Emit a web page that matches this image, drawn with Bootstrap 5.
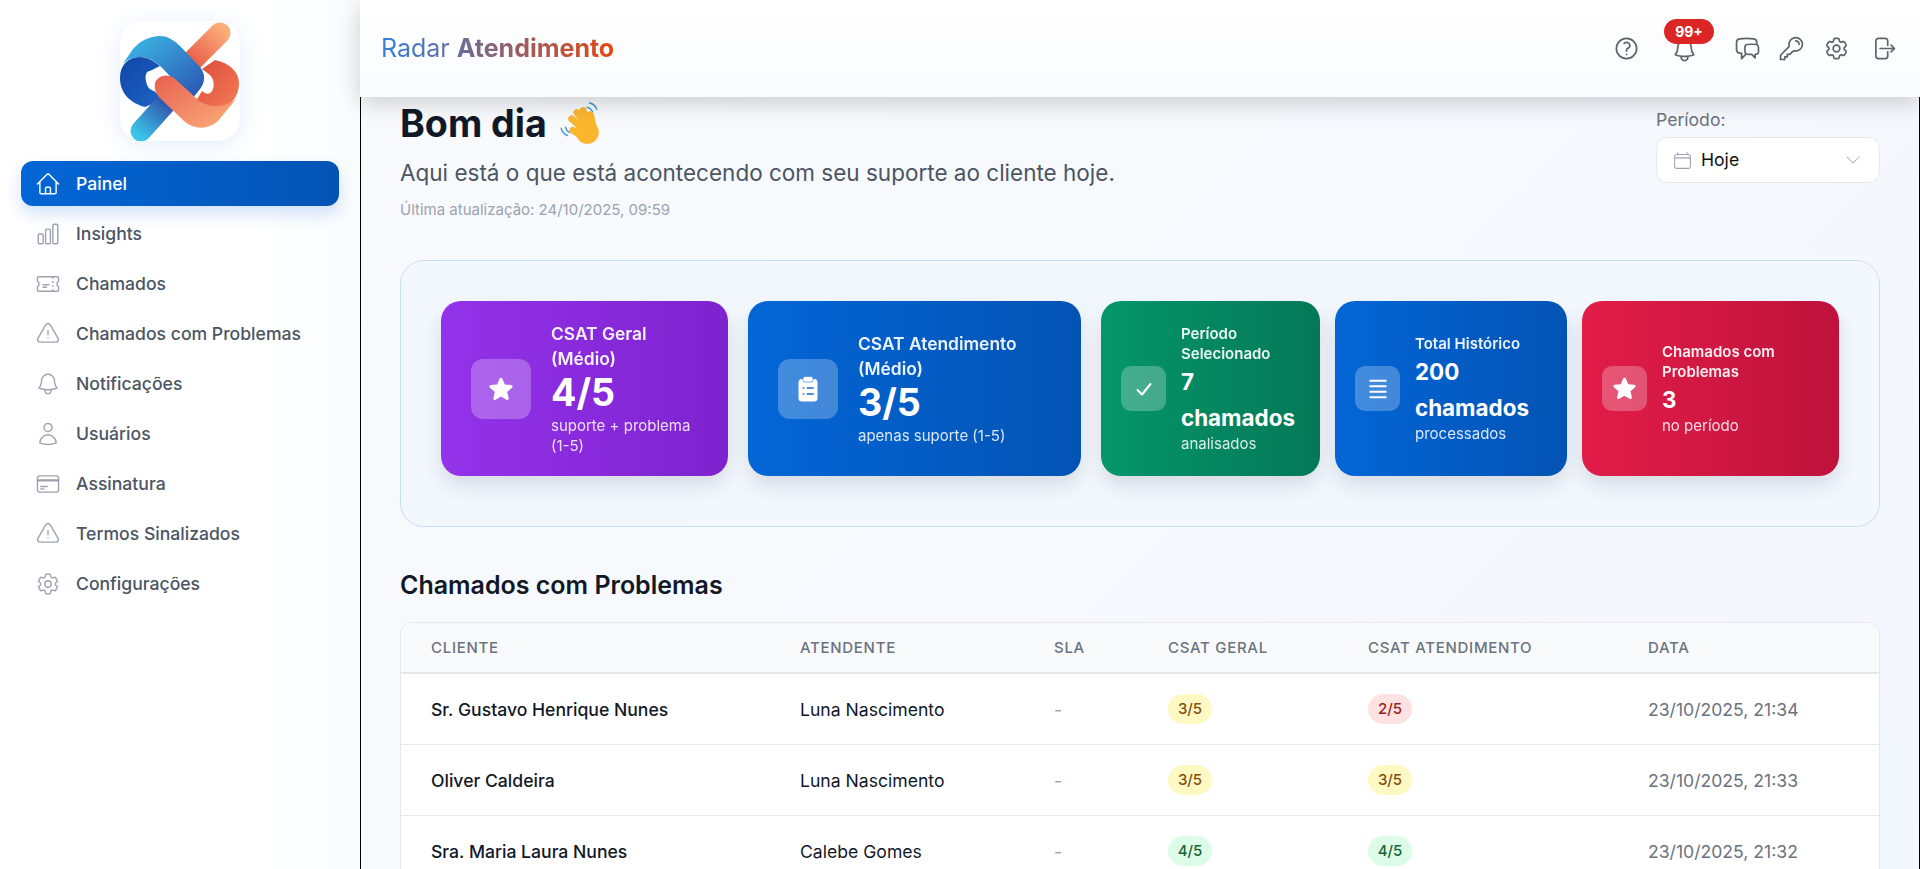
<!DOCTYPE html>
<html lang="pt-BR">
<head>
<meta charset="utf-8">
<title>Radar Atendimento</title>
<link href="https://cdn.jsdelivr.net/npm/bootstrap@5.3.0/dist/css/bootstrap.min.css" rel="stylesheet">
<style>
html,body{height:100%}
body{font-family:Inter,"Liberation Sans",sans-serif;background:#fff;overflow:hidden;color:#111827}
svg.ic{fill:none;stroke:currentColor;stroke-width:1.5;stroke-linecap:round;stroke-linejoin:round;flex:none}
.app-shell{height:869px}
.side-rail{width:360px;flex:none;background:linear-gradient(90deg,#fff 0%,#fff 70%,#f9fbfd 100%);padding:21px 21px 0 21px}
.logo-box{width:120px;height:120px;border-radius:22px;background:#fff;box-shadow:0 4px 24px rgba(59,130,246,.14);margin:0 auto 20px 99px}
.side-link{height:45px;margin-bottom:5px;padding:2px 14px 0;border-radius:12px;color:#4b5563;font-weight:500;font-size:17.6px;text-decoration:none;gap:15px}
.side-link svg{width:26px;height:26px;color:#9ca3af;stroke-width:1.3;margin-top:-2px}
.side-link.on{background:linear-gradient(90deg,#0366d6,#0353b4);color:#fff;box-shadow:0 8px 16px rgba(3,102,214,.18)}
.side-link.on svg{color:#fff}
.top-bar{height:97px;flex:none;margin-left:0;padding:0 23px 0 21px;background:linear-gradient(180deg,#fff,#fafbfd);box-shadow:0 6px 22px rgba(0,0,0,.18);position:relative;z-index:5}
.brand-name{font-size:25px;line-height:1;background:linear-gradient(90deg,#2f80dc 0%,#e6460f 100%);-webkit-background-clip:text;background-clip:text;color:transparent;font-weight:400}
.brand-name b{font-weight:700}
.top-icons{gap:0;color:#5f6368}
.top-btn{position:relative;color:#5f6368;background:none;border:0;padding:0;display:flex}
.top-btn svg{width:27px;height:27px;stroke-width:1.5}
.bell-btn{margin-top:4px}
.count-pill{position:absolute;left:-7px;top:-18px;width:50px;height:25px;border-radius:13px;background:#dc2626;color:#fff;font-size:14px;font-weight:700;line-height:25px;text-align:center}
.work-area{min-width:0;height:869px}
.scroll-pane{flex:1;min-height:0;overflow:hidden;border-left:1px solid #000;border-right:1px solid #000;background:linear-gradient(135deg,#f8fafc 0%,#f3f7fe 100%);padding:0 39px 0 39px}
.hello-row{padding-top:4px;height:163px}
.hello-title{font-size:37.6px;font-weight:700;color:#111827;line-height:44px;margin:0}
.hello-sub{font-size:22.5px;color:#4b5563;line-height:30px;margin:11px 0 0}
.hello-time{font-size:15px;color:#9ca3af;line-height:20px;margin:12px 0 0}
.hand{width:46px;height:46px;vertical-align:-10px;margin-left:1px}
.period-box{width:224px;margin-top:7px}
.period-label{font-size:17.6px;color:#6b7280;line-height:24px;margin-bottom:5px}
.period-select{height:46px;background:#fff;border:1px solid #e5e7eb;border-radius:12px;padding:0 16px 0 15px;font-size:17.6px;color:#111;font-weight:400;gap:8px}
.period-select .cal{width:21px;height:21px;color:#9ca3af;stroke-width:1.2}
.period-select .chev{width:20px;height:20px;color:#9ca3af;margin-left:auto;stroke-width:1.2}
.stats-panel{height:267px;border:1px solid #c8dff8;border-radius:24px;background:#f3f8fe;padding:40px;gap:15px}
.stat-tile{height:175px;border-radius:20px;color:#fff;padding:0 30px;gap:20px;box-shadow:0 10px 20px rgba(17,24,39,.12);flex:none}
.tile-a{width:287px;background:linear-gradient(90deg,#9333ea,#7e22ce);margin-right:5px}
.tile-b{width:333px;background:linear-gradient(90deg,#0366d6,#0353b4);margin-right:5px}
.tile-c{width:219px;background:linear-gradient(90deg,#059669,#047857)}
.tile-d{width:232px;background:linear-gradient(90deg,#0366d6,#0353b4)}
.tile-e{width:257px;background:linear-gradient(90deg,#e11d48,#be123c)}
.tile-sm{padding:0 20px;gap:15px}
.tile-glyph{width:60px;height:60px;border-radius:12px;background:rgba(255,255,255,.25);flex:none}
.tile-sm .tile-glyph{width:45px;height:45px;border-radius:10px}
.tile-glyph svg{width:28px;height:28px}
.tile-glyph svg.clip{width:24px;height:26px}
.tile-sm .tile-glyph svg{width:24px;height:24px}
.tile-sm .tile-glyph svg.big-star{width:27px;height:27px}
.tile-cap{font-size:17.4px;font-weight:600;line-height:25px;opacity:.92}
.tile-num{font-size:37.6px;font-weight:700;line-height:44px;margin-bottom:1.5px}
.tile-note{font-size:15px;line-height:20px;opacity:.85}
.tile-sm .tile-cap{font-size:15px;line-height:20px}
.tile-sm .tile-num{font-size:22.4px;line-height:36px;margin-bottom:0}
.tile-sm .tile-note{margin-top:-2px}
.section-head{font-size:25px;font-weight:600;color:#111827;line-height:32px;margin:42px 0 21px}
.data-wrap{background:#fff;border:1px solid #e5e7eb;border-bottom:0;border-radius:12px 12px 0 0;overflow:hidden}
.data-grid{table-layout:fixed;width:100%;margin:0}
.data-grid th{background:#f9fafb;font-size:15px;font-weight:500;letter-spacing:.7px;text-transform:uppercase;color:#6b7280;height:50px;padding:2px 0 0 30px;vertical-align:middle;border-bottom:2px solid #e5e7eb}
.data-grid td{height:71px;padding:3px 0 0 30px;vertical-align:middle;font-size:17.6px;font-weight:500;color:#111827;border-bottom:1px solid #e5e7eb;background:#fff}
.data-grid td.plain{font-weight:400}
.data-grid td.dim{color:#6b7280;font-weight:400}
.data-grid td.dash{color:#9ca3af;font-weight:400}
.score{display:inline-block;width:44px;height:30px;line-height:30px;border-radius:15px;text-align:center;font-size:15px;font-weight:500;position:relative;top:-1px}
.score-y{background:#fef9c3;color:#854d0e}
.score-r{background:#fee2e2;color:#991b1b}
.score-g{background:#dcfce7;color:#166534}
</style>
</head>
<body>
<svg width="0" height="0" class="position-absolute">
  <defs>
    <linearGradient id="gOr" gradientUnits="userSpaceOnUse" x1="72" y1="40" x2="102" y2="8"><stop offset="0" stop-color="#e8604c"/><stop offset="1" stop-color="#fbac78"/></linearGradient>
    <linearGradient id="gRd" x1="0" y1="0" x2="1" y2="1"><stop offset="0" stop-color="#dd4a3c"/><stop offset="1" stop-color="#f47c55"/></linearGradient>
    <linearGradient id="gDb" x1="0" y1="0" x2="1" y2="1"><stop offset="0" stop-color="#0f46a8"/><stop offset="1" stop-color="#1f66c4"/></linearGradient>
    <linearGradient id="gBl" x1="0" y1="0" x2="1" y2="1"><stop offset="0" stop-color="#3cc0e8"/><stop offset="1" stop-color="#2a4fb0"/></linearGradient>
    <linearGradient id="gLb" gradientUnits="userSpaceOnUse" x1="18" y1="114" x2="48" y2="80"><stop offset="0" stop-color="#3bc4ea"/><stop offset="1" stop-color="#3050a8"/></linearGradient>
    <linearGradient id="gSa" x1="0" y1="0" x2="1" y2="1"><stop offset="0" stop-color="#e85f50"/><stop offset="1" stop-color="#fbb07a"/></linearGradient>
  </defs>
</svg>
<div class="app-shell d-flex">
  <aside class="side-rail">
    <div class="logo-box">
      <svg viewBox="0 0 120 120" width="120" height="120" aria-label="Logo">
        <path d="M100 12 L72 40" stroke="url(#gOr)" stroke-width="21" stroke-linecap="round" fill="none"/>
        <path d="M95 39 C110 42 120 52 119 64 C118 78 108 88 94 87 L76 80 L82 70 C85 73 90 74 92 70 C95 65 94 58 90 54 L82 48Z" fill="url(#gRd)"/>
        <path d="M0 57 C0 44 8 36 20 36 C28 36 34 40 40 45 L30 50 C26 50 25 55 26 60 C27 66 30 69 34 70 L44 78 L25 86 C10 82 0 72 0 57Z" fill="url(#gDb)"/>
        <path d="M21 110 L46 82" stroke="url(#gLb)" stroke-width="21" stroke-linecap="round" fill="none"/>
        <path d="M2 44 L13 28 C20 20 30 15 40 15 C48 15 55 20 60 25 L80 46 C86 53 85 62 80 68 L72 78 L45 50 C38 42 30 36 20 36 C12 36 6 39 2 44Z" fill="url(#gBl)"/>
        <path d="M35 62 C38 55 46 52 54 57 L76 77 C84 85 100 90 116 78 L98 100 C88 109 74 109 64 100 L40 77 C36 73 34 68 35 62Z" fill="url(#gSa)"/>
      </svg>
    </div>
    <nav class="d-flex flex-column">
      <a class="side-link on d-flex align-items-center" href="#"><svg class="ic" viewBox="0 0 24 24"><path d="m2.25 12 8.954-8.955c.44-.439 1.152-.439 1.591 0L21.75 12M4.5 9.75v10.125c0 .621.504 1.125 1.125 1.125H9.75v-4.875c0-.621.504-1.125 1.125-1.125h2.25c.621 0 1.125.504 1.125 1.125V21h4.125c.621 0 1.125-.504 1.125-1.125V9.75M8.25 21h8.25"/></svg>Painel</a>
      <a class="side-link d-flex align-items-center" href="#"><svg class="ic" viewBox="0 0 24 24"><path d="M3 13.125C3 12.504 3.504 12 4.125 12h2.25c.621 0 1.125.504 1.125 1.125v6.75C7.5 20.496 6.996 21 6.375 21h-2.25A1.125 1.125 0 0 1 3 19.875v-6.75ZM9.75 8.625c0-.621.504-1.125 1.125-1.125h2.25c.621 0 1.125.504 1.125 1.125v11.25c0 .621-.504 1.125-1.125 1.125h-2.25a1.125 1.125 0 0 1-1.125-1.125V8.625ZM16.5 4.125c0-.621.504-1.125 1.125-1.125h2.25C20.496 3 21 3.504 21 4.125v15.75c0 .621-.504 1.125-1.125 1.125h-2.25a1.125 1.125 0 0 1-1.125-1.125V4.125Z"/></svg>Insights</a>
      <a class="side-link d-flex align-items-center" href="#"><svg class="ic" viewBox="0 0 24 24"><path d="M16.5 6v.75m0 3v.75m0 3v.75m0 3V18m-9-5.25h5.25M7.5 15h3M3.375 5.25c-.621 0-1.125.504-1.125 1.125v3.026a2.999 2.999 0 0 1 0 5.198v3.026c0 .621.504 1.125 1.125 1.125h17.25c.621 0 1.125-.504 1.125-1.125v-3.026a2.999 2.999 0 0 1 0-5.198V6.375c0-.621-.504-1.125-1.125-1.125H3.375Z"/></svg>Chamados</a>
      <a class="side-link d-flex align-items-center" href="#"><svg class="ic" viewBox="0 0 24 24"><path d="M12 9v3.75m-9.303 3.376c-.866 1.5.217 3.374 1.948 3.374h14.71c1.73 0 2.813-1.874 1.948-3.374L13.949 3.378c-.866-1.5-3.032-1.5-3.898 0L2.697 16.126ZM12 15.75h.007v.008H12v-.008Z"/></svg>Chamados com Problemas</a>
      <a class="side-link d-flex align-items-center" href="#"><svg class="ic" viewBox="0 0 24 24"><path d="M14.857 17.082a23.848 23.848 0 0 0 5.454-1.31A8.967 8.967 0 0 1 18 9.75V9A6 6 0 0 0 6 9v.75a8.967 8.967 0 0 1-2.312 6.022c1.733.64 3.56 1.085 5.455 1.31m5.714 0a24.255 24.255 0 0 1-5.714 0m5.714 0a3 3 0 1 1-5.714 0"/></svg>Notificações</a>
      <a class="side-link d-flex align-items-center" href="#"><svg class="ic" viewBox="0 0 24 24"><path d="M15.75 6a3.75 3.75 0 1 1-7.5 0 3.75 3.75 0 0 1 7.5 0ZM4.501 20.118a7.5 7.5 0 0 1 14.998 0A17.933 17.933 0 0 1 12 21.75c-2.676 0-5.216-.584-7.499-1.632Z"/></svg>Usuários</a>
      <a class="side-link d-flex align-items-center" href="#"><svg class="ic" viewBox="0 0 24 24"><path d="M2.25 8.25h19.5M2.25 9h19.5m-16.5 5.25h6m-6 2.25h3m-3.75 3h15a2.25 2.25 0 0 0 2.25-2.25V6.75A2.25 2.25 0 0 0 19.5 4.5h-15a2.25 2.25 0 0 0-2.25 2.25v10.5A2.25 2.25 0 0 0 4.5 19.5Z"/></svg>Assinatura</a>
      <a class="side-link d-flex align-items-center" href="#"><svg class="ic" viewBox="0 0 24 24"><path d="M12 9v3.75m-9.303 3.376c-.866 1.5.217 3.374 1.948 3.374h14.71c1.73 0 2.813-1.874 1.948-3.374L13.949 3.378c-.866-1.5-3.032-1.5-3.898 0L2.697 16.126ZM12 15.75h.007v.008H12v-.008Z"/></svg>Termos Sinalizados</a>
      <a class="side-link d-flex align-items-center" href="#"><svg class="ic" viewBox="0 0 24 24"><path d="M9.594 3.94c.09-.542.56-.94 1.11-.94h2.593c.55 0 1.02.398 1.11.94l.213 1.281c.063.374.313.686.645.87.074.04.147.083.22.127.325.196.72.257 1.075.124l1.217-.456a1.125 1.125 0 0 1 1.37.49l1.296 2.247a1.125 1.125 0 0 1-.26 1.431l-1.003.827c-.293.241-.438.613-.43.992a7.723 7.723 0 0 1 0 .255c-.008.378.137.75.43.991l1.004.827c.424.35.534.955.26 1.43l-1.298 2.247a1.125 1.125 0 0 1-1.369.491l-1.217-.456c-.355-.133-.75-.072-1.076.124a6.47 6.47 0 0 1-.22.128c-.331.183-.581.495-.644.869l-.213 1.281c-.09.543-.56.94-1.11.94h-2.594c-.55 0-1.019-.398-1.11-.94l-.213-1.281c-.062-.374-.312-.686-.644-.87a6.52 6.52 0 0 1-.22-.127c-.325-.196-.72-.257-1.076-.124l-1.217.456a1.125 1.125 0 0 1-1.369-.49l-1.297-2.247a1.125 1.125 0 0 1 .26-1.431l1.004-.827c.292-.24.437-.613.43-.991a6.932 6.932 0 0 1 0-.255c.007-.38-.138-.751-.43-.992l-1.004-.827a1.125 1.125 0 0 1-.26-1.43l1.297-2.247a1.125 1.125 0 0 1 1.37-.491l1.216.456c.356.133.751.072 1.076-.124.072-.044.146-.086.22-.128.332-.183.582-.495.644-.869l.214-1.28Z"/><path d="M15 12a3 3 0 1 1-6 0 3 3 0 0 1 6 0Z"/></svg>Configurações</a>
    </nav>
  </aside>
  <div class="work-area flex-grow-1 d-flex flex-column">
    <header class="top-bar d-flex align-items-center justify-content-between">
      <div class="brand-name">Radar <b>Atendimento</b></div>
      <div class="top-icons d-flex align-items-center">
        <button class="top-btn" style="margin-right:31px"><svg class="ic" viewBox="0 0 24 24"><path d="M9.879 7.519c1.171-1.025 3.071-1.025 4.242 0 1.172 1.025 1.172 2.687 0 3.712-.203.179-.43.326-.67.442-.745.361-1.45.999-1.45 1.827v.75M21 12a9 9 0 1 1-18 0 9 9 0 0 1 18 0Zm-9 5.25h.008v.008H12v-.008Z"/></svg></button>
        <button class="top-btn bell-btn" style="margin-right:36px"><svg class="ic" viewBox="0 0 24 24"><path d="M14.857 17.082a23.848 23.848 0 0 0 5.454-1.31A8.967 8.967 0 0 1 18 9.75V9A6 6 0 0 0 6 9v.75a8.967 8.967 0 0 1-2.312 6.022c1.733.64 3.56 1.085 5.455 1.31m5.714 0a24.255 24.255 0 0 1-5.714 0m5.714 0a3 3 0 1 1-5.714 0"/></svg><span class="count-pill">99+</span></button>
        <button class="top-btn" style="margin-right:17px"><svg class="ic" viewBox="0 0 24 24"><path d="M20.25 8.511c.884.284 1.5 1.128 1.5 2.097v4.286c0 1.136-.847 2.1-1.98 2.193-.34.027-.68.052-1.02.072v3.091l-3-3c-1.354 0-2.694-.055-4.02-.163a2.115 2.115 0 0 1-.825-.242m9.345-8.334a2.126 2.126 0 0 0-.476-.095 48.64 48.64 0 0 0-8.048 0c-1.131.094-1.976 1.057-1.976 2.192v4.286c0 .837.46 1.58 1.155 1.951m9.345-8.334V6.637c0-1.621-1.152-3.026-2.76-3.235A48.455 48.455 0 0 0 11.25 3c-2.115 0-4.198.137-6.24.402-1.608.209-2.76 1.614-2.76 3.235v6.226c0 1.621 1.152 3.026 2.76 3.235.577.075 1.157.14 1.74.194V21l4.155-4.155"/></svg></button>
        <button class="top-btn" style="margin-right:18px"><svg class="ic" viewBox="0 0 24 24"><path d="M15.75 5.25a3 3 0 0 1 3 3m3 0a6 6 0 0 1-7.029 5.912c-.563-.097-1.159.026-1.563.43L10.5 17.25H8.25v2.25H6v2.25H2.25v-2.818c0-.597.237-1.17.659-1.591l6.499-6.499c.404-.404.527-1 .43-1.563A6 6 0 1 1 21.75 8.25Z"/></svg></button>
        <button class="top-btn" style="margin-right:20px"><svg class="ic" viewBox="0 0 24 24"><path d="M9.594 3.94c.09-.542.56-.94 1.11-.94h2.593c.55 0 1.02.398 1.11.94l.213 1.281c.063.374.313.686.645.87.074.04.147.083.22.127.325.196.72.257 1.075.124l1.217-.456a1.125 1.125 0 0 1 1.37.49l1.296 2.247a1.125 1.125 0 0 1-.26 1.431l-1.003.827c-.293.241-.438.613-.43.992a7.723 7.723 0 0 1 0 .255c-.008.378.137.75.43.991l1.004.827c.424.35.534.955.26 1.43l-1.298 2.247a1.125 1.125 0 0 1-1.369.491l-1.217-.456c-.355-.133-.75-.072-1.076.124a6.47 6.47 0 0 1-.22.128c-.331.183-.581.495-.644.869l-.213 1.281c-.09.543-.56.94-1.11.94h-2.594c-.55 0-1.019-.398-1.11-.94l-.213-1.281c-.062-.374-.312-.686-.644-.87a6.52 6.52 0 0 1-.22-.127c-.325-.196-.72-.257-1.076-.124l-1.217.456a1.125 1.125 0 0 1-1.369-.49l-1.297-2.247a1.125 1.125 0 0 1 .26-1.431l1.004-.827c.292-.24.437-.613.43-.991a6.932 6.932 0 0 1 0-.255c.007-.38-.138-.751-.43-.992l-1.004-.827a1.125 1.125 0 0 1-.26-1.43l1.297-2.247a1.125 1.125 0 0 1 1.37-.491l1.216.456c.356.133.751.072 1.076-.124.072-.044.146-.086.22-.128.332-.183.582-.495.644-.869l.214-1.28Z"/><path d="M15 12a3 3 0 1 1-6 0 3 3 0 0 1 6 0Z"/></svg></button>
        <button class="top-btn"><svg class="ic" viewBox="0 0 24 24"><path d="M15.75 9V5.25A2.25 2.25 0 0 0 13.5 3h-6a2.25 2.25 0 0 0-2.25 2.25v13.5A2.25 2.25 0 0 0 7.5 21h6a2.25 2.25 0 0 0 2.25-2.25V15m3 0 3-3m0 0-3-3m3 3H9"/></svg></button>
      </div>
    </header>
    <main class="scroll-pane">
      <div class="hello-row d-flex justify-content-between align-items-start">
        <div>
          <h1 class="hello-title">Bom dia <svg class="hand" viewBox="0 0 44 44" aria-hidden="true"><g fill="none" stroke-linecap="round"><path d="M31 2c3 .6 6 3 7 6M29 6c2 .5 4 2 5 4" stroke="#3d9bd6" stroke-width="1.4"/><path d="M4 26c.6 3 3 6 6 7M8 25c.5 2 2 4 4 5" stroke="#3d9bd6" stroke-width="1.4"/><g stroke="#fbb62e" stroke-width="6.500"><path d="M25 27 14 17"/><path d="M28 24 19 11"/><path d="M31 24 25 9"/><path d="M35 26 32 13"/><path d="M25 34 15 28"/></g></g><circle cx="29" cy="30" r="11" fill="#fbb62e"/></svg></h1>
          <p class="hello-sub">Aqui está o que está acontecendo com seu suporte ao cliente hoje.</p>
          <p class="hello-time">Última atualização: 24/10/2025, 09:59</p>
        </div>
        <div class="period-box">
          <div class="period-label">Período:</div>
          <div class="period-select d-flex align-items-center">
            <svg class="ic cal" viewBox="0 0 24 24"><path d="M6.75 3v2.250M17.250 3v2.250M3 18.750V7.500a2.250 2.250 0 0 1 2.250-2.250h13.500A2.250 2.250 0 0 1 21 7.500v11.250m-18 0A2.250 2.250 0 0 0 5.250 21h13.500A2.250 2.250 0 0 0 21 18.750m-18 0v-7.500A2.250 2.250 0 0 1 5.250 9h13.500A2.250 2.250 0 0 1 21 11.250v7.500"/></svg>
            <span>Hoje</span>
            <svg class="ic chev" viewBox="0 0 24 24"><path d="m19.500 8.250-7.500 7.500-7.500-7.500"/></svg>
          </div>
        </div>
      </div>
      <section class="stats-panel d-flex">
        <div class="stat-tile tile-a d-flex align-items-center">
          <div class="tile-glyph d-flex align-items-center justify-content-center"><svg viewBox="0 0 24 24" fill="#fff"><path d="M10.788 3.21c.448-1.077 1.976-1.077 2.424 0l2.082 5.006 5.404.434c1.164.093 1.636 1.545.749 2.305l-4.117 3.527 1.257 5.273c.271 1.136-.964 2.033-1.96 1.425L12 18.354 7.373 21.18c-.996.608-2.231-.29-1.96-1.425l1.257-5.273-4.117-3.527c-.887-.76-.415-2.212.749-2.305l5.404-.434 2.082-5.005Z"/></svg></div>
          <div>
            <div class="tile-cap">CSAT Geral (Médio)</div>
            <div class="tile-num">4/5</div>
            <div class="tile-note">suporte + problema (1-5)</div>
          </div>
        </div>
        <div class="stat-tile tile-b d-flex align-items-center">
          <div class="tile-glyph d-flex align-items-center justify-content-center"><svg class="clip" viewBox="0 0 24 26"><rect x="2.500" y="3" width="19" height="22.500" rx="3.500" fill="#fff"/><rect x="7" y=".5" width="10" height="5.500" rx="2" fill="#fff" stroke="#4f8fe0" stroke-width=".8"/><path stroke="#4f8fe0" stroke-width="2" stroke-linecap="round" fill="none" d="M7.500 12h.1M11.500 12h5.500M7.500 18h.1M11.500 18h5.500"/></svg></div>
          <div>
            <div class="tile-cap">CSAT Atendimento (Médio)</div>
            <div class="tile-num">3/5</div>
            <div class="tile-note">apenas suporte (1-5)</div>
          </div>
        </div>
        <div class="stat-tile tile-sm tile-c d-flex align-items-center">
          <div class="tile-glyph d-flex align-items-center justify-content-center"><svg viewBox="0 0 24 24" fill="none" stroke="#fff" stroke-width="2" stroke-linecap="round" stroke-linejoin="round"><path d="m5.500 13 4.500 4.500 8.500-10.500"/></svg></div>
          <div>
            <div class="tile-cap">Período Selecionado</div>
            <div class="tile-num">7 chamados</div>
            <div class="tile-note">analisados</div>
          </div>
        </div>
        <div class="stat-tile tile-sm tile-d d-flex align-items-center">
          <div class="tile-glyph d-flex align-items-center justify-content-center"><svg viewBox="0 0 24 24" fill="none" stroke="#fff" stroke-width="2.200"><path d="M3.500 3.750h17M3.500 9.250h17M3.500 14.750h17M3.500 20.250h17"/></svg></div>
          <div>
            <div class="tile-cap">Total Histórico</div>
            <div class="tile-num">200 chamados</div>
            <div class="tile-note">processados</div>
          </div>
        </div>
        <div class="stat-tile tile-sm tile-e d-flex align-items-center">
          <div class="tile-glyph d-flex align-items-center justify-content-center"><svg class="big-star" viewBox="0 0 24 24" fill="#fff"><path d="M10.788 3.21c.448-1.077 1.976-1.077 2.424 0l2.082 5.006 5.404.434c1.164.093 1.636 1.545.749 2.305l-4.117 3.527 1.257 5.273c.271 1.136-.964 2.033-1.960 1.425L12 18.354 7.373 21.18c-.996.608-2.231-.29-1.960-1.425l1.257-5.273-4.117-3.527c-.887-.76-.415-2.212.749-2.305l5.404-.434 2.082-5.005Z"/></svg></div>
          <div>
            <div class="tile-cap">Chamados com Problemas</div>
            <div class="tile-num">3</div>
            <div class="tile-note">no período</div>
          </div>
        </div>
      </section>
      <h2 class="section-head">Chamados com Problemas</h2>
      <div class="data-wrap">
        <table class="data-grid">
          <colgroup><col style="width:369px"><col style="width:254px"><col style="width:114px"><col style="width:200px"><col style="width:280px"><col></colgroup>
          <thead><tr><th>Cliente</th><th>Atendente</th><th>SLA</th><th>CSAT Geral</th><th>CSAT Atendimento</th><th>Data</th></tr></thead>
          <tbody>
            <tr><td>Sr. Gustavo Henrique Nunes</td><td class="plain">Luna Nascimento</td><td class="dash">-</td><td><span class="score score-y">3/5</span></td><td><span class="score score-r">2/5</span></td><td class="dim">23/10/2025, 21:34</td></tr>
            <tr><td>Oliver Caldeira</td><td class="plain">Luna Nascimento</td><td class="dash">-</td><td><span class="score score-y">3/5</span></td><td><span class="score score-y">3/5</span></td><td class="dim">23/10/2025, 21:33</td></tr>
            <tr><td>Sra. Maria Laura Nunes</td><td class="plain">Calebe Gomes</td><td class="dash">-</td><td><span class="score score-g">4/5</span></td><td><span class="score score-g">4/5</span></td><td class="dim">23/10/2025, 21:32</td></tr>
          </tbody>
        </table>
      </div>
    </main>
  </div>
</div>
<script src="https://cdn.jsdelivr.net/npm/bootstrap@5.3.0/dist/js/bootstrap.bundle.min.js"></script>
</body>
</html>
